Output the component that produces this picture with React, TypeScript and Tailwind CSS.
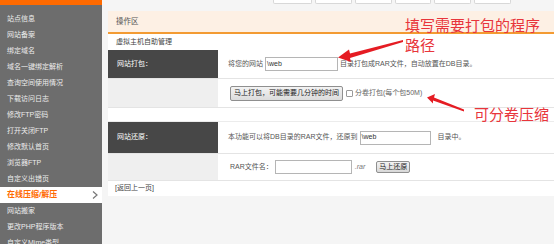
import React from "react";

const menu = [
  "站点信息",
  "网站备案",
  "绑定域名",
  "域名一键绑定解析",
  "查询空间使用情况",
  "下载访问日志",
  "修改FTP密码",
  "打开关闭FTP",
  "修改默认首页",
  "浏览器FTP",
  "自定义出错页",
  "在线压缩/解压",
  "网站搬家",
  "更改PHP程序版本",
  "自定义Mime类型",
];

const tabs = [39, 37, 37, 36, 37, 37];

const Sidebar = () => (
  <div className="w-[102px] shrink-0 bg-[#6d6d6d] flex flex-col overflow-hidden">
    <div className="h-[5px] shrink-0 bg-[#ff6a00]" />
    <div className="h-[6px] shrink-0" />
    {menu.map((name, i) =>
      name === "在线压缩/解压" ? (
        <div key={i} className="h-[16px] shrink-0 bg-white flex items-center justify-between pl-[7px] pr-[4px]">
          <span className="text-[8px] font-bold text-[#ff6a00]">{name}</span>
          <svg width="6" height="8" viewBox="0 0 6 8">
            <polyline points="1,0.5 5,4 1,7.5" fill="none" stroke="#777" strokeWidth="1.2" />
          </svg>
        </div>
      ) : (
        <div key={i} className="h-[16px] shrink-0 flex items-center pl-[7px] text-[7px] text-[#ececec] whitespace-nowrap">
          {name}
        </div>
      )
    )}
  </div>
);

const Input = ({ w, value = "" }: { w: string; value?: string }) => (
  <div className={`${w} h-[14px] bg-white border border-[#b5b5b5] flex items-center pl-[1px] text-[7px] text-[#333]`}>
    {value}
  </div>
);

const Btn = ({ children }: { children: React.ReactNode }) => (
  <div className="h-[15px] px-[3px] flex items-center border border-[#8f8f8f] rounded-[2px] bg-gradient-to-b from-[#f3f3f3] to-[#dcdcdc] text-[7px] text-[#222] whitespace-nowrap">
    {children}
  </div>
);

const Label = ({ dark, children }: { dark?: boolean; children?: React.ReactNode }) => (
  <div
    className={`w-[110px] shrink-0 flex items-center pl-[9px] text-[7px] ${
      dark ? "bg-[#474747] text-white" : "bg-[#efefef]"
    }`}
  >
    {children}
  </div>
);

export default function App() {
  return (
    <div className="relative w-[554px] h-[244px] overflow-hidden flex font-['Liberation_Sans','Noto_Sans_CJK_SC',sans-serif] text-[#555]">
      <Sidebar />

      <div className="flex-1 bg-[#f5f5f5] pl-[6px] flex flex-col min-w-0">
        {/* top button row, mostly scrolled off */}
        <div className="h-[11px] shrink-0 flex items-start pl-[165px] gap-[3px]">
          {tabs.map((w, i) => (
            <div
              key={i}
              style={{ width: w }}
              className="h-[4px] bg-white border border-t-0 border-[#d8d8d8] rounded-b-[2px] shrink-0"
            />
          ))}
        </div>

        <div className="bg-white flex flex-col shrink-0">
          <div className="h-[23px] bg-[#fdf0e4] border-b-2 border-[#f39b33] flex items-center pl-[8px] text-[7.5px] text-[#555]">
            操作区
          </div>
          <div className="h-[16px] flex items-center pl-[8px] text-[7px] text-[#444]">虚拟主机自助管理</div>

          <div className="h-[29px] flex border-b border-[#e4e4e4]">
            <Label dark>网站打包：</Label>
            <div className="flex items-center pl-[10px] text-[7px] whitespace-nowrap">
              <span>将您的网站</span>
              <div className="ml-[2px]">
                <Input w="w-[73px]" value="\web" />
              </div>
              <span className="ml-[2px]">目录打包成RAR文件，自动放置在DB目录。</span>
            </div>
          </div>

          <div className="h-[29px] flex border-b border-[#e4e4e4]">
            <Label />
            <div className="flex items-center pl-[12px] text-[7px] whitespace-nowrap">
              <Btn>马上打包，可能需要几分钟的时间</Btn>
              <div className="ml-[3px] w-[7px] h-[7px] border border-[#9a9a9a] bg-white rounded-[1px]" />
              <span className="ml-[2px] text-[#666]">分卷打包(每个包50M)</span>
            </div>
          </div>

          <div className="h-[14px] border-b border-[#ececec]" />

          <div className="h-[32px] flex border-b border-[#e4e4e4]">
            <Label dark>网站还原：</Label>
            <div className="flex items-center pl-[10px] text-[7px] whitespace-nowrap">
              <span>本功能可以将DB目录的RAR文件，还原到</span>
              <div className="ml-[2px]">
                <Input w="w-[71px]" value="\web" />
              </div>
              <span className="ml-[7px]">目录中。</span>
            </div>
          </div>

          <div className="h-[27px] flex border-b border-[#e4e4e4]">
            <Label />
            <div className="flex items-center pl-[12px] text-[7px] whitespace-nowrap">
              <span>RAR文件名：</span>
              <div className="ml-[2px]">
                <Input w="w-[77px]" />
              </div>
              <span className="ml-[3px] italic text-[#777]">.rar</span>
              <div className="ml-[11px]">
                <div className="h-[12px] px-[2px] flex items-center border border-[#8f8f8f] rounded-[2px] bg-gradient-to-b from-[#f3f3f3] to-[#d8d8d8] text-[7px] text-[#222]">
                  马上还原
                </div>
              </div>
            </div>
          </div>

          <div className="h-[15px] flex items-center pl-[7px] text-[7px] text-[#444]">[返回上一页]</div>
        </div>
      </div>

      {/* annotations drawn over the screenshot */}
      <div className="absolute left-[405px] top-[15px] text-[15px] leading-[20px] text-[#e8353b] font-['Noto_Sans_CJK_SC',sans-serif] whitespace-nowrap">
        填写需要打包的程序
        <br />
        路径
      </div>
      <div className="absolute left-[474px] top-[104px] text-[15px] leading-[20px] text-[#e8353b] font-['Noto_Sans_CJK_SC',sans-serif] whitespace-nowrap">
        可分卷压缩
      </div>
      <svg className="absolute left-0 top-0 pointer-events-none" width="554" height="244">
        <polygon points="403,40 350,53.5 349,49.5 338,57.5 351,62 350,58 403,42" fill="#e51c23" />
        <polygon points="464,109.5 434,97.5 435,94 427,97.5 433,103.5 433,100.5 464,111.5" fill="#e51c23" />
      </svg>
    </div>
  );
}
